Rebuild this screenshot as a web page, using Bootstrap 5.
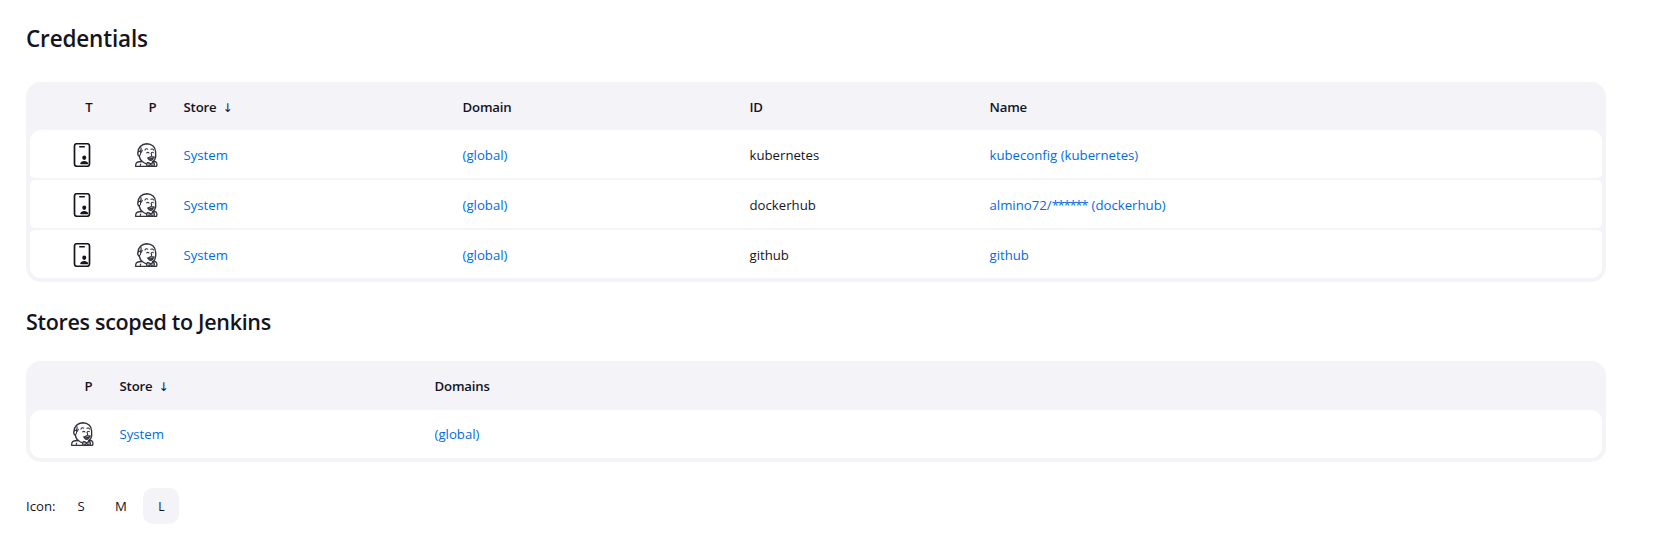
<!DOCTYPE html>
<html lang="en">
<head>
<meta charset="utf-8">
<meta name="viewport" content="width=device-width, initial-scale=1">
<title>Credentials [Jenkins]</title>
<link href="https://cdn.jsdelivr.net/npm/bootstrap@5.3.0/dist/css/bootstrap.min.css" rel="stylesheet">
<style>
  body { font-family: "Open Sans", "Noto Sans", sans-serif; font-size: 13.2px; line-height: 20px; color: #14141f; background: #fff; }
  main { padding: 22px 63px 0 26px; }
  h1, h2 { font-weight: 600; line-height: 34px; color: #14141f; }
  h1 { font-size: 22.5px; letter-spacing: -.17px; margin-bottom: 26px; }
  h2 { font-size: 21.5px; letter-spacing: -.31px; margin: 23px 0 22px; }
  a { color: #006ce6; text-decoration: none; }
  a:hover { text-decoration: underline; }
  .jenkins-table { display: grid; row-gap: 2px; background: #f3f3f8; border: 4px solid #f3f3f8; border-top-width: 0; border-radius: 15px; }
  .line { display: grid; align-items: center; height: 48px; background: #fff; border-radius: 5px; }
  .line.heading { background: none; font-weight: 600; letter-spacing: -.15px; margin-bottom: -2px; }
  .heading + .line { border-top-left-radius: 11px; border-top-right-radius: 11px; }
  .line:last-child { border-bottom-left-radius: 11px; border-bottom-right-radius: 11px; }
  .creds .line { grid-template-columns: 63.5px 64px 26px 279px 287px 240px 1fr; padding-top: 2px; }
  .stores .line { grid-template-columns: 63.5px 26px 315px 1fr; }
  .stores .heading { height: 49px; padding-top: 1px; }
  .heading .text-end { padding-right: 1px; }
  .arrow { font-family: "DejaVu Sans", sans-serif; font-size: 12px; line-height: 1; margin-left: 6px; font-weight: 400; }
  .masked { letter-spacing: -1.35px; margin-right: 1px; }
  .size-btn { width: 36px; height: 36px; border-radius: 10px; color: #14141f; }
  .size-btn.active { background: #f3f3f8; font-size: 12px; padding: 2px 0 0 1px; }
  .sizes { margin-top: 26px; }
  .size-label { width: 33px; }
  .sym { width: 24px; height: 24px; display: inline-block; }
</style>
</head>
<body>
<svg class="d-none" xmlns="http://www.w3.org/2000/svg">
  <symbol id="idcard" viewBox="0 0 512 512">
    <rect x="96" y="16" width="320" height="480" rx="48" fill="none" stroke="#14141f" stroke-width="36"/>
    <path d="M208 80h96" stroke="#14141f" stroke-width="32" stroke-linecap="round"/>
    <ellipse cx="304" cy="315" rx="43" ry="46" fill="#14141f"/>
    <path d="M378 452H230c-9 0-14-7-12-15 6-36 42-55 86-55s80 19 86 55c2 8-3 15-12 15z" fill="#14141f"/>
  </symbol>
  <symbol id="butler" viewBox="0 0 24 24">
    <g fill="none" stroke="#33333d" stroke-width="1.4" stroke-linecap="round" stroke-linejoin="round">
      <path d="M8 18.500C6.500 17 5.600 14.900 5.200 13C3.600 12.200 3.400 10 4.200 8.800C4.200 4.500 7.500.9 12.800.7C18 .7 21.500 4.200 21.600 9c.4 3.500.2 5.600-.9 7.600-.6 1-1.300 1.700-2.200 2"/>
      <path stroke-width="1.100" d="M6.600 3.800c.9 1.400.6 3-.1 4.400M4.200 8.800c1.100-.9 2.500-.3 2.500.9 0 1.400-.6 2.600-1.600 3.200M6.700 9.600c1.200 0 1.300-1.400 1.600-2.400"/>
      <path stroke-width="1.150" d="M11 6.900c.6-1.200 1.800-1.500 2.700-.8M17 6.300c1-.6 2-.3 2.500.6M12.800 9.800c.7-.6 1.500-.6 2.100 0M17.500 9.600c.7-.5 1.300-.4 1.800 0M17.100 10.300c.2 1.100 1 1.500.4 2.300"/>
      <path stroke-width="1.200" d="M13.500 15c1.300-.2 2-.9 3.100-1.300 1.400.2 2.300-.2 3.600.4M14.300 15.800c1.300 2.500 4.300 2.200 5-.8-1.700.8-3.300.8-5 .8z" fill="#66666f"/>
      <path stroke-width="1.300" d="M8 18.100c1.800 1.700 3.400 2.500 5.200 3M8 18.500c-3 0-6 1-6.200 2.900l-.2 1.900h21c.5-1.700.4-3.400-.6-4.300-1.100-.9-2.100-.5-3.200.4"/>
      <path stroke-width="1.100" d="M6.700 21.200c-.5.600-.5 1.300-.4 2.100M13.200 19.600c-.9 1-.9 2.400-.3 3.700 1.400-.1 2.600-.8 3.700-1.600 1 1 2.200 1.600 3.600 1.600.5-1.500.3-2.800-.4-3.900-1.200.1-2.200.7-3.200 1.400-.9-.8-2-1.300-3.400-1.200z" fill="#aaaab2"/>
    </g>
  </symbol>
</svg>

<main>
  <h1>Credentials</h1>
  <div class="jenkins-table creds" role="table">
    <div class="line heading" role="row"><span class="text-end">T</span><span class="text-end">P</span><span></span><span>Store<span class="arrow">↓</span></span><span>Domain</span><span>ID</span><span>Name</span></div>
    <div class="line" role="row"><span class="d-flex justify-content-end"><svg class="sym"><use href="#idcard"/></svg></span><span class="d-flex justify-content-end"><svg class="sym"><use href="#butler"/></svg></span><span></span><span><a href="#">System</a></span><span><a href="#">(global)</a></span><span>kubernetes</span><span><a href="#">kubeconfig (kubernetes)</a></span></div>
    <div class="line" role="row"><span class="d-flex justify-content-end"><svg class="sym"><use href="#idcard"/></svg></span><span class="d-flex justify-content-end"><svg class="sym"><use href="#butler"/></svg></span><span></span><span><a href="#">System</a></span><span><a href="#">(global)</a></span><span>dockerhub</span><span><a href="#">almino72/<span class="masked">******</span> (dockerhub)</a></span></div>
    <div class="line" role="row"><span class="d-flex justify-content-end"><svg class="sym"><use href="#idcard"/></svg></span><span class="d-flex justify-content-end"><svg class="sym"><use href="#butler"/></svg></span><span></span><span><a href="#">System</a></span><span><a href="#">(global)</a></span><span>github</span><span><a href="#">github</a></span></div>
  </div>

  <h2>Stores scoped to Jenkins</h2>
  <div class="jenkins-table stores" role="table">
    <div class="line heading" role="row"><span class="text-end">P</span><span></span><span>Store<span class="arrow">↓</span></span><span>Domains</span></div>
    <div class="line" role="row"><span class="d-flex justify-content-end"><svg class="sym"><use href="#butler"/></svg></span><span></span><span><a href="#">System</a></span><span><a href="#">(global)</a></span></div>
  </div>

  <div class="sizes d-flex align-items-center gap-1">
    <span class="size-label">Icon:</span>
    <a class="size-btn d-flex align-items-center justify-content-center" href="#">S</a>
    <a class="size-btn d-flex align-items-center justify-content-center" href="#">M</a>
    <a class="size-btn active d-flex align-items-center justify-content-center" href="#">L</a>
  </div>
</main>
<script src="https://cdn.jsdelivr.net/npm/bootstrap@5.3.0/dist/js/bootstrap.bundle.min.js"></script>
</body>
</html>
